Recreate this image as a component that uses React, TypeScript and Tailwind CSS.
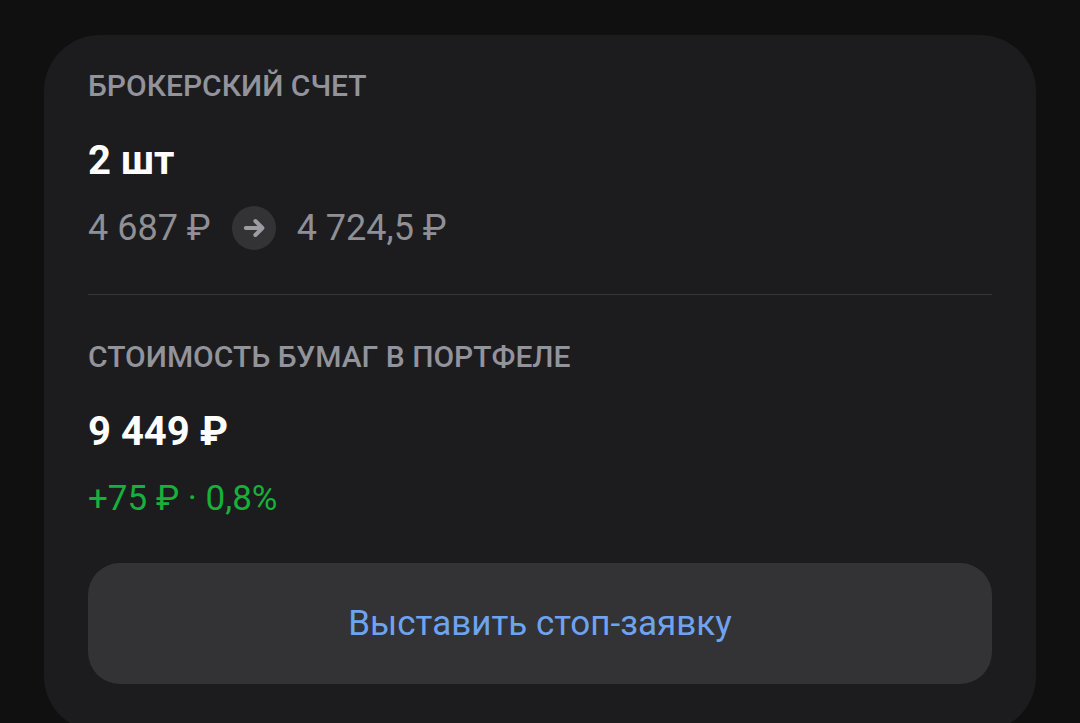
import { clsx } from "clsx";

type SectionProps = {
  title: string;
  value: string;
  className?: string;
  children: React.ReactNode;
};

function Section({ title, value, className, children }: SectionProps) {
  return (
    <section className={clsx("flex flex-col", className)}>
      <h2 className="text-[30px] leading-9 font-medium text-[#92939b]">{title}</h2>
      <p className="mt-[33px] text-[40px] leading-12 font-bold text-white">{value}</p>
      {children}
    </section>
  );
}

function ArrowBadge() {
  return (
    <span className="flex size-11 items-center justify-center rounded-full bg-[#333335]">
      <svg
        viewBox="0 0 24 24"
        className="size-6"
        fill="none"
        stroke="#9b9da2"
        strokeWidth="4"
        strokeLinecap="round"
        strokeLinejoin="round"
        aria-hidden="true"
      >
        <path d="M3.8 12H20M13.4 5l7 7-7 7" />
      </svg>
    </span>
  );
}

export default function App() {
  return (
    <main className="min-h-screen bg-[#101010] px-11 pt-[35px] font-[Roboto,sans-serif]">
      <div className="rounded-[56px] bg-[#1c1c1e] px-11 pt-[33px] pb-12">
        <Section title="БРОКЕРСКИЙ СЧЕТ" value="2 шт">
          <div className="mt-[21px] flex items-center gap-[21px] text-4xl leading-11 text-[#8f9096]">
            <span>4 687 ₽</span>
            <ArrowBadge />
            <span>4 724,5 ₽</span>
          </div>
        </Section>
        <hr className="mt-11 border-[#363638]" />
        <Section title="СТОИМОСТЬ БУМАГ В ПОРТФЕЛЕ" value="9 449 ₽" className="mt-11">
          <p className="mt-[21px] text-[35px] leading-11 text-[#16b03a]">+75 ₽ · 0,8%</p>
        </Section>
        <button
          type="button"
          className="mt-[42px] w-full rounded-[32px] bg-[#333335] py-10 text-[35px] leading-[41px] text-[#6ea3f2]"
        >
          Выставить стоп-заявку
        </button>
      </div>
    </main>
  );
}
